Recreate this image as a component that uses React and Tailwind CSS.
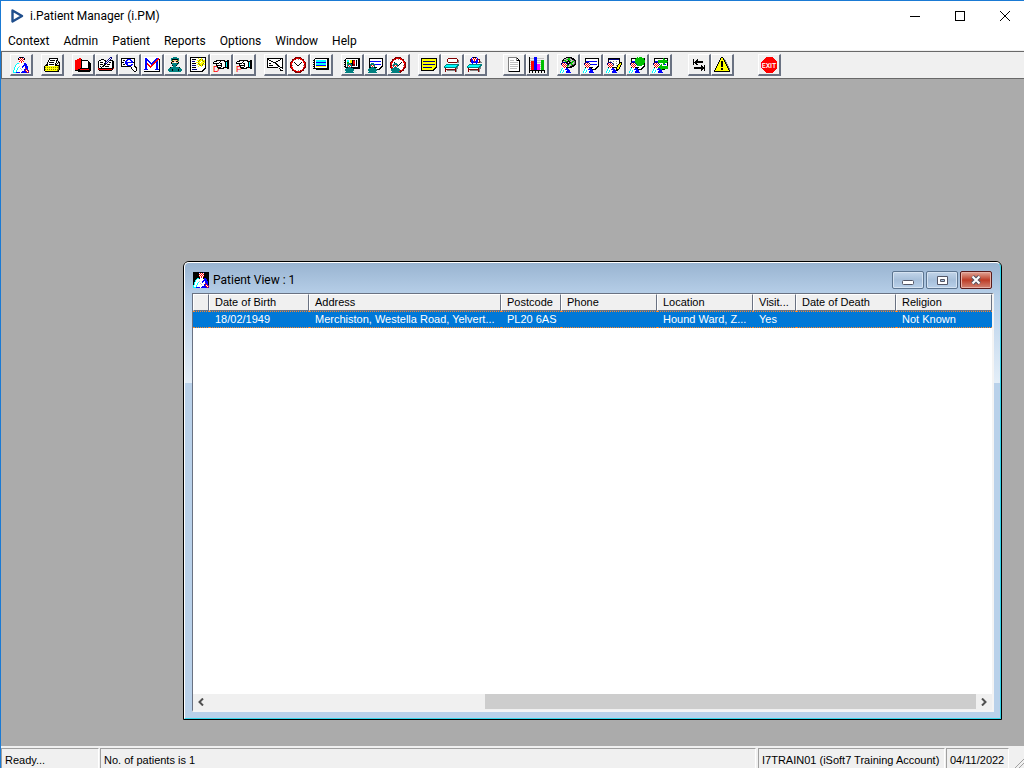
import { clsx } from "clsx";

const palette = {
  k: "#000000",
  w: "#ffffff",
  r: "#ff0000",
  d: "#800000",
  b: "#0000ff",
  n: "#000080",
  c: "#00ffff",
  t: "#008080",
  y: "#ffff00",
  o: "#808000",
  g: "#808080",
  l: "#c0c0c0",
  v: "#00c000",
  m: "#ff00ff",
  s: "#ffc890",
};

const doctor = [
  "......nkkkn.....",
  ".....kwrwrwk....",
  ".....krwrwrk....",
  "......wrwrw.....",
  "......rwrwr.....",
  ".......wrw......",
  "....cc.www.bb...",
  "...cwwwwwwwbbb..",
  "..cwwwwwwwbbbb..",
  "..cwwwlwwbbwbbb.",
  ".cwwwcwwwbwwbbb.",
  ".cwwcwwlwwwwrbb.",
  ".cwwcwwwlwwbbrb.",
  "cwwcwwwwwwwbrwrb",
  "cwwcwwwwwbbbbrwr",
  "cccbbbbwbbbbbbrb",
];

const smallDoctor = [
  "", "", "", "", "",
  "..nnnn",
  ".nrwrwn",
  ".nwrwrwn",
  "..rwrwr",
  "..wrwrw",
  "...wrw",
  "..cwwwbb",
  ".cwwwbbbb",
  ".cwcwwwbbb",
  "cwwcwwbbbb",
  "cwcwwwbbbbb",
];

const surgeon = [
  "", "", "", "", "", "",
  "....ttt",
  "...ttttt",
  "...trwrt",
  "...twrwt",
  "....ttt",
  "..ttttttt",
  ".ttttttttt",
  ".ttttttttt",
  "..ttttttt",
  ".ttttttttt",
];

const noteCard = [
  "",
  "..kkkkkkkkkkkkkk",
  "..kwwwwwwwwwwwwk",
  "..kwwwwwwwwwwwwk",
  "..kbbbbbbbbbbbwk",
  "..kwwwwwwwwwwwwk",
  "..kwwwwwwwwwwwwk",
  "..kbbbbbbbbbbbwk",
  "..kwwwwwwwwwwwwk",
  "..kwwwwwwwwwwwkk",
  "..kkkkkkkkwwwkk",
  "........kwwwkk",
  "........kkkkk",
];

const folder = [
  "",
  ".....kkkkkkkkk",
  ".....kwwwwwwwk",
  "....kwkkkkkwkk",
  "....kwwwwwwwk.k",
  "...kwkkkkkwwk.kk",
  "...kwwwwwwwk.k.k",
  "..kkwkkkkkwkk..k",
  ".kkkwwwwwwwkkkkk",
  "kyyyyyyyyyyyyyok",
  "koyoyoyoyoyoyook",
  "kyyyyyyyyyyyyyok",
  "koyoyoyoyoyoyook",
  "kyyyyyyyyyyyyok",
  ".kkkkkkkkkkkkkk",
];

const redBook = [
  "",
  "....rr",
  "..rrrrk",
  "rrrrrrkkkkkkk",
  "rrrrrrkwwwwwwk",
  "rrrrrrkwwwwwwkk",
  "rrrrrrkwwwwwwkkk",
  "rrrrrrkwwwwwwkkk",
  "rrrrrrkwwwwwwkkk",
  "rrrrrrkwwwwwwkkk",
  "rrrrrrkwwwwwwkkk",
  "rrrrrkkkkkkkkkkk",
  "rrrkkrrrrrrrrrkk",
  "kkkkkkkkkkkkkkkk",
  "...kkkkkkkkkkkk",
];

const bookPen = [
  "............nn",
  "...........nwn",
  "...kkk....nwn",
  ".kkwwwkk.nwnkkk",
  "kwwwwwwknwnwwwkk",
  "kwkkkwwnwnwkkwkk",
  "kwwwwwknnwwwwwkk",
  "kwkkkwkkwkkkwwkk",
  "kwwwwkkwwwwwwwkk",
  "kwkwkkwkkkkwwwkk",
  "kwwkwwwwwwwwwwkk",
  "rkkkkkkkkkkkkkkr",
  "drrrrrrrrrrrrrk",
  ".kkkkkkkkkkkkk",
];

const eye = [
  "",
  "kkkkkkkkkkkkkk",
  "kwwwwwbbbbwwwk",
  "kwkkwbbwwbbwwk",
  "kwwwbbwwwwbbwk",
  "kkkwbbbbbbbbkk",
  "kwwwbbbwwwwwwk",
  "kwkkwbbwwwbbwk",
  "kwwwwwbbbbbwwk",
  "kkkkkkkkkkwwwkk",
  "..........kwwwkk",
  "..........kwwwwk",
  "...........kwwwk",
  "............kwwk",
  ".............kk",
];

const monitorTick = [
  "wwwwwwwwwwwwwwww",
  "wbbwwwwwwwwwbbrw",
  "wbbbwwwwwwwbbrrk",
  "wbbbbwwwwwbbrrwk",
  "wbbwbbwwwbbrrbwk",
  "wbbwwbbwbbrrbbwk",
  "wbbrwwbbbrrwbbwk",
  "wbbrrwwbrrwwbbwk",
  "wbbwrrwrrwwwbbwk",
  "wbbwwrrrwwwwbbwk",
  "wbbwwwrwwwwwbbwk",
  "wbbwwwwwwwwwbbwk",
  "bbbbwwwwwwwbbbbk",
  "wwwwwwwwwwwwwwwk",
  "kkkkkkkkkkkkkkkk",
];

const theatre = [
  "......tttt",
  "....tttttttt",
  "....tkkkkkkt",
  "....tossssot",
  "....skksskks",
  "....ksswwssk",
  "....ktttttkt",
  ".....tttttt",
  ".....ktttk",
  "......ttt",
  "...kttttttttk",
  "..tttttttttttt",
  ".ttttktttttkttt",
  ".ttttktttttkttt",
  "..tttttttttttt",
];

const flowerNote = [
  "kkkkkkkkkkkkkkkk",
  "kwwwwwwwywwywwwk",
  "kwkkkkwwwyoyowwk",
  "kwwwwwwyyoyyoyyk",
  "kwnnnwwwoyywyoyk",
  "kwwwwwyyyywyyyyk",
  "kwkkkkwwoyyyyowk",
  "kwwwwwwyyoyyoyyk",
  "kwnnnnwwwyoyowwk",
  "kwwwwwwwywwywwwk",
  "kwkkkkwwwwwwwwwk",
  "kwwwwwwwwwwwwwkk",
  "kwnnnnnwwwwwwkk",
  "kwwwwwwwwwwwkk",
  "kkkkkkkkkkkkk",
];

const hand = [
  "",
  "",
  "",
  "...kkkkkkkkk..kk",
  ".kkkwwwkwwwkkkkk",
  "kwwwwwkwwwwwkckk",
  "kkkkkkwkkwwwkckk",
  "...kwwwwkwwwkckk",
  "...kkkkkkwwwkckk",
  "....kwwwkwwwkckk",
  "....kkkkwwkkkkkk",
  ".....kkkkkk...kk",
];

const crossedPad = [
  "",
  "kkkkkkkkkkkkkkkk",
  "kkwwwwwwwwwwwkwk",
  "kwkkwwwwwwwkkwwk",
  "kwwwkkwwwkkwwwwk",
  "kwwwwwkkkwwwwwwk",
  "kwkkwwwwkkwwwwwk",
  "kwwwwwwwwkkwwwwk",
  "kwkkkkwwwwkkwwwk",
  "kwwwwwwwwwwkkwwk",
  "kkkkkkkkkkkwwkkk",
  "............kwwk",
  ".............kwwk",
  ".............kkk",
];

const linedBook = [
  "",
  "..kkkkkkkkkkkkkk",
  ".kwwwwwwwwwwwwkk",
  "kkwccccccccccwkk",
  ".kwccccccccccwkk",
  "kkwbbbbbbbbbbwkk",
  ".kwccccccccccwkk",
  "kkwccccccccccwkk",
  ".kwbbbbbbbbbbwkk",
  "kkwyyyyyyyyyywkk",
  ".kwwwwwwwwwwwwkk",
  "kkkkkkkkkkkkkkkk",
  "...kkkkkkkkkkkkk",
];

const chartBook = [
  "",
  "..kkkkkkkkkkkkkk",
  ".kwwwwwwwwwwwwkk",
  "kkwccwyykddwkwkk",
  ".kwccwyykrrwkwkk",
  "kkwvvwyykrrwkwkk",
  ".kwvvwkkkrrwkwkk",
  "kkwccwyykddwkwkk",
  ".kwwwwwwkddwkwkk",
  "kkwwwwwwwwwwwwkk",
  ".kkkkkkkkkkkkkkk",
  ".....kkkkkkkkkkk",
];

const yellowNote = [
  "",
  "kkkkkkkkkkkkkkkk",
  "kyyyyyyyyyyyyyyk",
  "kyyyyyyyyyyyyyyk",
  "kynnnnnnnnnnnnyk",
  "kyyyyyyyyyyyyyyk",
  "kyyyyyyyyyyyyyyk",
  "kynnnnnnnnnnnnyk",
  "kyyyyyyyyyyyyyyk",
  "kyyyyyyyyyyyyyyk",
  "kynnnnnnnnnyyykk",
  "kyyyyyyyyyyyykk",
  "kyyyyyyyyyyykk",
  "kkkkkkkkkkkkk",
];

const bed = [
  "",
  "....ddddddddd",
  "...dwwwwwwwwwd",
  "...dwwwwwwwwwdg",
  "...dwwwwwwwwwdg",
  "....dddddddddgg",
  "....wwwwwwwww",
  "..ttttttttttttt",
  ".tccccccccccctt",
  "tccccccccccctt",
  "tttttttttttttg",
  ".dwwwwwwwwwdgg",
  ".dddddddddddg",
  ".d.ggggggggdg",
  ".d.........dg",
];

const bedPatient = [
  ".....bkkkb",
  "....bwrwrwb",
  "...dbrwrwrbdd",
  "...dbbwrwbbwd",
  "...dbbbrbbbwdg",
  "....bbbbbbbddgg",
  "....wbwwwbwww",
  "..ttttttttttttt",
  ".tccccccccccctt",
  "tccccccccccctt",
  "tttttttttttttg",
  ".dwwwwwwwwwdgg",
  ".dddddddddddg",
  ".d.ggggggggdg",
  ".d.........dg",
];

const page = [
  "..ggggggggg",
  "..gwwwwwwwgk",
  "..gwwwwwwwgwk",
  "..gwllllwwgkkk",
  "..gwwwwwwwwwwk",
  "..gwllllllllwk",
  "..gwwwwwwwwwwk",
  "..gwllllllllwk",
  "..gwwwwwwwwwwk",
  "..gwllllllllwk",
  "..gwwwwwwwwwwk",
  "..gwlllllllwwk",
  "..gwwwwwwwwwwk",
  "..gwwwwwwwwwwk",
  "..gkkkkkkkkkkk",
];

const bars = [
  "k....bbb",
  "kllllbbblllllll",
  "k....bbb",
  "kllllbbbllllvvv",
  "k.rrrbbb....vvv",
  "klrrrbbbllllvvv",
  "k.rrrbbb....vvv",
  "klrrrbbbmmmlvvv",
  "k.rrrbbbmmm.vvv",
  "klrrrbbbmmmlvvv",
  "k.rrrbbbmmm.vvv",
  "klrrrbbbmmmlvvv",
  "k.rrrbbbmmm.vvv",
  "kkkkkkkkkkkkkkkk",
  "k..k..k..k..k..k",
  "k..k..k..k..k..k",
];

const globe = [
  "......kkkkkk",
  "....kkllvvgkkk",
  "...kllgvvvllkkk",
  "..kkvvllkvvllgkk",
  "..kllvvkkkllvvgk",
  "..kvvlkkwkkvvlgk",
  "..kllvvkkkvvllgk",
  "..kggvvlkllvvgkk",
  "...kllgvvllgkkk",
  "....kkvvllkkkk",
  "......kkkkkk",
];

const formPencil = [
  "",
  "..kkkkkkkkkkkk",
  "..knnnnnnnnnnk",
  "..kwwwwwwwwwwk",
  "..kwgwwgwwgwwk",
  "..kwwwwwwwwwwkkk",
  "..kwgwwgwwgwwkyk",
  "..kwwwwwwwwwkyyk",
  "..kwgwwgwwgkyyk",
  "..kwwwwwwwwkyyk",
  "..kkkkkkkkkyyk",
  "..........kyyk",
  "..........kkk",
  "..........kk",
];

const greenBall = [
  "........v.vvv",
  ".......vvvvvvvv",
  "......vvvvvvvvv",
  "......vvvvvvvvvv",
  "......vvvvvvvvvv",
  "......vvvvvvvvvv",
  "......vvvvvvvvv",
  ".......vvvvvvvv",
  "........vvvvv",
];

const greenArrows = [
  "",
  "...........v",
  "...........vv",
  "......vvvvvvvvv",
  "......vvvvvvvvvv",
  "......vvvvvvvvv",
  "...........vvw",
  "........wvwv",
  "........vvww",
  ".......vvvvvvvvv",
  "......vvvvvvvvvv",
  ".......vvvvvvvvv",
  "........vv",
  ".........v",
];

const tabArrows = [
  "",
  "",
  "..k...k",
  "..k..kk",
  "..k.kkkkkkkk",
  "..kkkkkkkkkk",
  "..k.kk",
  "..k..kk",
  "..........k..k",
  "..........kk.k",
  "...kkkkkkkkkkk",
  "...kkkkkkkkkkk",
  "..........kk.k",
  "..........k..k",
];

const warning = [
  ".......kk",
  "......kyyk",
  "......kyykg",
  ".....kyyyykg",
  ".....kykkykg",
  "....kyykkyykg",
  "....kyykkyykg",
  "...kyyykkyyykg",
  "...kyyykkyyykg",
  "..kyyyykkyyyykg",
  "..kyyyyyyyyyykg",
  ".kyyyyykkyyyyykg",
  ".kyyyyykkyyyyykg",
  "kyyyyyyyyyyyyyyk",
  "kkkkkkkkkkkkkkkk",
];

function Pixels({ rows }) {
  const rects = [];
  rows.forEach((row, y) => {
    let x = 0;
    while (x < row.length) {
      let end = x + 1;
      while (row[end] === row[x]) end++;
      if (palette[row[x]]) {
        rects.push(
          <rect key={`${x}-${y}`} x={x} y={y} width={end - x} height="1" fill={palette[row[x]]} />
        );
      }
      x = end;
    }
  });
  return <g>{rects}</g>;
}

function Clock() {
  return (
    <g>
      <circle cx="8" cy="8" r="7" fill="#fff" stroke="#800000" strokeWidth="2" />
      <circle cx="8" cy="8" r="6.5" fill="none" stroke="#f00" strokeWidth="1" strokeDasharray="3 1" />
      <path d="M4 5l4 4l4-4" fill="none" stroke="#000" strokeWidth="1" />
      <path d="M8 2v1M8 13v1M2 8h1M13 8h1" stroke="#808080" strokeWidth="1" />
    </g>
  );
}

function Letter({ children }) {
  return (
    <text x="0" y="15" fill="#f00" fontSize="9" fontFamily="Liberation Sans, sans-serif">
      {children}
    </text>
  );
}

function Exit() {
  return (
    <g>
      <path d="M5 0h6l5 5v6l-5 5h-6l-5-5v-6z" fill="#f00" />
      <text
        x="8"
        y="11"
        fill="#fff"
        fontSize="7"
        fontWeight="500"
        textAnchor="middle"
        fontFamily="Roboto, sans-serif"
      >
        EXIT
      </text>
    </g>
  );
}

const toolGroups = [
  { gap: "ml-0", tools: [{ label: "Patient", layers: [doctor] }] },
  { gap: "ml-2", tools: [{ label: "Open folder", layers: [folder] }] },
  {
    gap: "ml-2",
    tools: [
      { label: "Case notes", layers: [redBook] },
      { label: "Edit notes", layers: [bookPen] },
      { label: "Enquiry", layers: [eye] },
      { label: "Maternity", layers: [monitorTick] },
      { label: "Theatre", layers: [theatre] },
      { label: "Alerts", layers: [flowerNote] },
      { label: "Refer D", layers: [hand], extra: <Letter>D</Letter> },
      { label: "Refer P", layers: [hand], extra: <Letter>P</Letter> },
    ],
  },
  {
    gap: "ml-2",
    tools: [
      { label: "Waiting list", layers: [crossedPad] },
      { label: "Appointments", layers: [], extra: <Clock /> },
      { label: "Sessions", layers: [linedBook] },
    ],
  },
  {
    gap: "ml-2",
    tools: [
      { label: "Clinic chart", layers: [chartBook, surgeon] },
      { label: "Clinic notes", layers: [noteCard, surgeon] },
      { label: "Clinic times", layers: [surgeon], extra: <Clock /> },
    ],
  },
  {
    gap: "ml-2",
    tools: [
      { label: "Notes", layers: [yellowNote] },
      { label: "Beds", layers: [bed] },
      { label: "Inpatients", layers: [bedPatient] },
    ],
  },
  {
    gap: "ml-4",
    tools: [
      { label: "Document", layers: [page] },
      { label: "Statistics", layers: [bars] },
    ],
  },
  {
    gap: "ml-2",
    tools: [
      { label: "Community", layers: [globe, smallDoctor] },
      { label: "Doctor notes", layers: [noteCard, smallDoctor] },
      { label: "Doctor form", layers: [formPencil, smallDoctor] },
      { label: "Doctor status", layers: [noteCard, greenBall, smallDoctor] },
      { label: "Transfer", layers: [noteCard, greenArrows, smallDoctor] },
    ],
  },
  {
    gap: "ml-4",
    tools: [
      { label: "Switch", layers: [tabArrows] },
      { label: "Warning", layers: [warning] },
    ],
  },
  { gap: "ml-6", tools: [{ label: "Exit", layers: [], extra: <Exit /> }] },
];

function ToolButton({ label, layers, extra }) {
  return (
    <button
      type="button"
      aria-label={label}
      className="flex h-[22px] w-[23px] items-center justify-center border-t border-r-2 border-b-2 border-l border-t-white border-r-gray-500 border-b-gray-500 border-l-white bg-[#f0f0f0]"
    >
      <svg width="16" height="16" viewBox="0 0 16 16" shapeRendering="crispEdges">
        {extra}
        {layers.map((rows, i) => (
          <Pixels key={i} rows={rows} />
        ))}
      </svg>
    </button>
  );
}

const captionButton = "flex h-7 w-[45px] items-center justify-center";

function TitleBar() {
  return (
    <header className="flex h-[30px] shrink-0 items-center bg-white pl-[9px]">
      <svg width="14" height="14" viewBox="0 0 14 14" className="mr-[6px]">
        <path d="M2.500 1.500L12 7L2.500 12.500z" fill="none" stroke="#1f4e8c" strokeWidth="2.400" strokeLinejoin="round" />
      </svg>
      <h1>i.Patient Manager (i.PM)</h1>
      <div className="-mr-[3px] ml-auto flex">
        <button type="button" aria-label="Minimize" className={captionButton}>
          <svg width="10" height="10" viewBox="0 0 10 10" shapeRendering="crispEdges">
            <path d="M0 5.500h10" stroke="#000" />
          </svg>
        </button>
        <button type="button" aria-label="Maximize" className={captionButton}>
          <svg width="10" height="10" viewBox="0 0 10 10" shapeRendering="crispEdges">
            <path d="M.5.5h9v9h-9z" fill="none" stroke="#000" />
          </svg>
        </button>
        <button type="button" aria-label="Close" className={captionButton}>
          <svg width="10" height="10" viewBox="0 0 10 10">
            <path d="M0 0l10 10M10 0L0 10" stroke="#000" />
          </svg>
        </button>
      </div>
    </header>
  );
}

const menus = ["Context", "Admin", "Patient", "Reports", "Options", "Window", "Help"];

const columns = [
  { title: "", width: "w-4", value: "" },
  { title: "Date of Birth", width: "w-[100px]", value: "18/02/1949" },
  { title: "Address", width: "w-[192px]", value: "Merchiston, Westella Road, Yelvert..." },
  { title: "Postcode", width: "w-[60px]", value: "PL20 6AS" },
  { title: "Phone", width: "w-[96px]", value: "" },
  { title: "Location", width: "w-[96px]", value: "Hound Ward, Z..." },
  { title: "Visit...", width: "w-[43px]", value: "Yes" },
  { title: "Date of Death", width: "w-[100px]", value: "" },
  { title: "Religion", width: "w-auto", value: "Not Known" },
];

function PatientTable() {
  return (
    <table className="w-full table-fixed border-separate border-spacing-0 text-left font-['Liberation_Sans',sans-serif] text-[11px] leading-[15px] whitespace-nowrap">
      <thead>
        <tr>
          {columns.map((col, i) => (
            <th
              key={i}
              className={clsx(
                "h-[17px] border-t border-r border-b border-l border-t-white border-r-gray-500 border-b-gray-500 border-l-white bg-[#f0f0f0] p-0 pl-[5px] font-normal",
                col.width
              )}
            >
              {col.title}
            </th>
          ))}
        </tr>
      </thead>
      <tbody>
        <tr className="bg-[#0078d7] text-white">
          {columns.map((col, i) => (
            <td key={i} className="h-[17px] border-y border-dotted border-[#ff8728] p-0 pl-[6px]">
              {col.value}
            </td>
          ))}
        </tr>
      </tbody>
    </table>
  );
}

function ScrollBar() {
  return (
    <div className="flex h-4 shrink-0 bg-[#f0f0f0]">
      <button type="button" aria-label="Scroll left" className="flex w-4 items-center justify-center">
        <svg width="6" height="8" viewBox="0 0 6 8">
          <path d="M5 .5L1.500 4L5 7.500" fill="none" stroke="#505050" strokeWidth="2" />
        </svg>
      </button>
      <div className="flex flex-1 justify-end pb-px">
        <div className="w-[64%] bg-[#cdcdcd]" />
      </div>
      <button type="button" aria-label="Scroll right" className="flex w-4 items-center justify-center">
        <svg width="6" height="8" viewBox="0 0 6 8">
          <path d="M1 .5L4.500 4L1 7.500" fill="none" stroke="#505050" strokeWidth="2" />
        </svg>
      </button>
    </div>
  );
}

const frameButton =
  "flex h-[18px] w-8 items-center justify-center rounded-[2px] border ring-1 ring-inset";

const blueButton =
  "border-[#5c7590] bg-linear-to-b from-[#c3d5e9] via-[#a6bfda] to-[#b9d1ea] ring-[#d5e3f2]";

function PatientWindow() {
  return (
    <section className="absolute top-[182px] right-[22px] bottom-[26px] left-[182px] flex flex-col rounded-t-md border border-black">
      <div className="flex min-h-0 flex-1 flex-col rounded-t-[5px] border border-t-white border-r-[#35d5ea] border-b-[#35d5ea] border-l-white bg-[linear-gradient(#99b4d1_0px,#b9d1ea_34px,#e4eef8_120px,#b9d1ea_120px)] pr-[6px] pb-[6px] pl-[7px]">
        <div className="flex h-[30px] shrink-0 items-center pt-1">
          <svg width="16" height="16" viewBox="0 0 16 16" shapeRendering="crispEdges" className="mr-1 ml-px">
            <rect width="16" height="16" />
            <Pixels rows={doctor} />
          </svg>
          <h2>Patient View : 1</h2>
          <div className="ml-auto flex gap-[2px] pr-[2px]">
            <button type="button" aria-label="Minimize window" className={clsx(frameButton, blueButton)}>
              <svg width="12" height="5" viewBox="0 0 12 5" className="mt-1">
                <rect x=".5" y=".5" width="11" height="4" rx="1" fill="#fff" stroke="#535666" />
              </svg>
            </button>
            <button type="button" aria-label="Maximize window" className={clsx(frameButton, blueButton)}>
              <svg width="11" height="9" viewBox="0 0 11 9">
                <path d="M.5.5h10v8h-10zM3.500 3.500h4v2h-4z" fill="#fff" fillRule="evenodd" stroke="#535666" />
              </svg>
            </button>
            <button
              type="button"
              aria-label="Close window"
              className={clsx(frameButton, "border-[#5a1a1a] bg-linear-to-b from-[#e0a598] via-[#bd3b25] to-[#d28373] ring-[#e8b0a5]")}
            >
              <svg width="12" height="10" viewBox="0 0 12 10">
                <path d="M2.500 1.500l7 7M9.500 1.500l-7 7" stroke="#535666" strokeWidth="4" />
                <path d="M2.500 1.500l7 7M9.500 1.500l-7 7" stroke="#fff" strokeWidth="2" />
              </svg>
            </button>
          </div>
        </div>
        <div className="flex min-h-0 flex-1 flex-col border-t border-r-2 border-b-2 border-l border-t-gray-500 border-r-[#f4f4f4] border-b-[#f4f4f4] border-l-gray-500 bg-white">
          <div className="flex-1">
            <PatientTable />
          </div>
          <ScrollBar />
        </div>
      </div>
    </section>
  );
}

const panel = "border-t border-r border-l border-[#a0a0a0] border-r-white px-[3px] pt-[3px]";

function StatusBar() {
  return (
    <footer className="flex h-[22px] shrink-0 gap-px bg-[#f0f0f0] pt-[2px] font-['Liberation_Sans',sans-serif] text-[11px] leading-4 whitespace-nowrap">
      <div className={clsx(panel, "w-[98px]")}>Ready...</div>
      <div className={clsx(panel, "flex-1")}>No. of patients is 1</div>
      <div className={clsx(panel, "ml-px w-[187px]")}>I7TRAIN01 (iSoft7 Training Account)</div>
      <div className={clsx(panel, "w-[63px]")}>04/11/2022</div>
      <div className="flex w-[14px] items-end justify-end">
        <svg width="13" height="13" viewBox="0 0 13 13">
          <path d="M4 13L13 4M8 13L13 8" stroke="#a0a0a0" />
        </svg>
      </div>
    </footer>
  );
}

export default function App() {
  return (
    <div className="flex h-screen flex-col overflow-hidden border-t border-l border-[#1a7ad4] bg-white font-[Roboto,sans-serif] text-xs text-black">
      <TitleBar />
      <nav className="flex h-5 shrink-0 items-center border-b border-[#f0f0f0] bg-white">
        {menus.map((menu) => (
          <button key={menu} type="button" className="px-[7px]">
            {menu}
          </button>
        ))}
      </nav>
      <div className="flex h-7 shrink-0 items-center border-y border-l border-[#696969] bg-[#f0f0f0] pl-2">
        {toolGroups.map((group, i) => (
          <div key={i} className={clsx("flex", group.gap)}>
            {group.tools.map((tool) => (
              <ToolButton key={tool.label} {...tool} />
            ))}
          </div>
        ))}
      </div>
      <main className="relative min-h-0 flex-1 bg-[#ababab]">
        <PatientWindow />
      </main>
      <StatusBar />
    </div>
  );
}
